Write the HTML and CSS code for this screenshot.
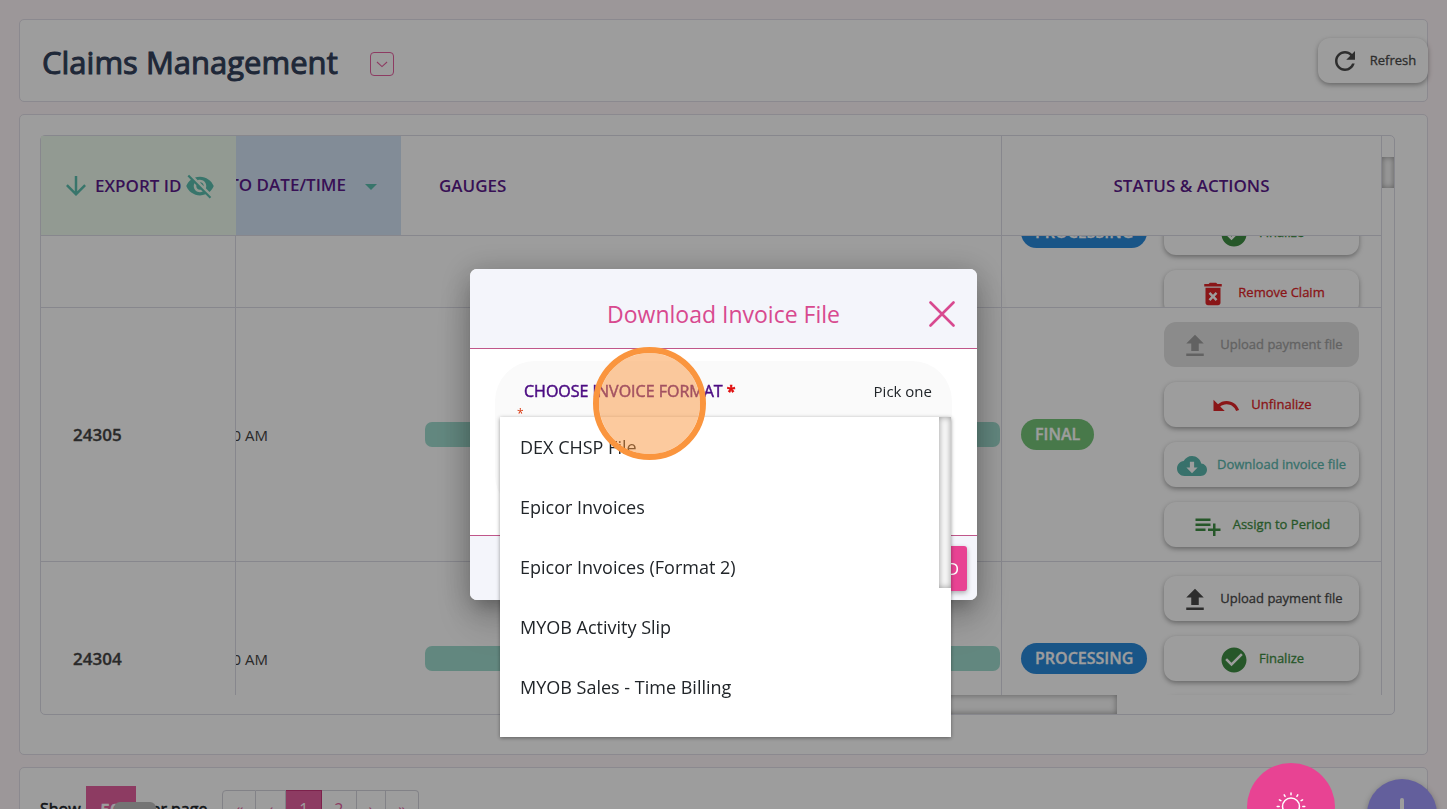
FILE: index.html
```html
<!DOCTYPE html>
<html lang="en">
<head>
<title>Claims Management</title>
<meta charset="utf-8">
<meta name="viewport" content="width=device-width, initial-scale=1">
<link rel="stylesheet" href="styles.css">
</head>
<body>
	<!-- icons shared by the table and the toolbar -->
	<svg class="sprite" aria-hidden="true">
		<symbol id="i-refresh" viewBox="0 0 24 24"><path d="M17.65 6.35C16.2 4.9 14.21 4 12 4c-4.42 0-7.99 3.58-7.99 8s3.57 8 7.99 8c3.73 0 6.84-2.55 7.73-6h-2.08c-.82 2.33-3.04 4-5.65 4-3.31 0-6-2.69-6-6s2.69-6 6-6c1.66 0 3.14.69 4.22 1.78L13 11h7V4l-2.35 2.35z"/></symbol>
		<symbol id="i-remove" viewBox="0 0 24 24"><path d="M6 19c0 1.1.9 2 2 2h8c1.1 0 2-.9 2-2V7H6v12zm2.46-7.12l1.41-1.41L12 12.59l2.12-2.12 1.41 1.41L13.41 14l2.12 2.12-1.41 1.41L12 15.41l-2.12 2.12-1.41-1.41L10.59 14l-2.13-2.12zM15.5 4l-1-1h-5l-1 1H5v2h14V4z"/></symbol>
		<symbol id="i-upload" viewBox="0 0 24 24"><path d="M9 16h6v-6h4l-7-7-7 7h4zm-4 2h14v2H5z"/></symbol>
		<symbol id="i-undo" viewBox="0 0 24 24"><path d="M12.5 8c-2.65 0-5.05.99-6.9 2.6L2 7v9h9l-3.62-3.62c1.39-1.16 3.16-1.88 5.12-1.88 3.54 0 6.55 2.31 7.6 5.5l2.37-.78C21.08 11.03 17.15 8 12.5 8z"/></symbol>
		<symbol id="i-cloud" viewBox="0 0 24 24"><path fill-rule="evenodd" d="M19.35 10.04C18.67 6.59 15.64 4 12 4 9.11 4 6.6 5.64 5.35 8.04 2.34 8.36 0 10.91 0 14c0 3.31 2.69 6 6 6h13c2.76 0 5-2.24 5-5 0-2.64-2.05-4.78-4.65-4.96zM16.5 13.2L12 17.7l-4.5-4.5h2.8V8.6h3.4v4.6z"/></symbol>
		<symbol id="i-assign" viewBox="0 0 24 24"><path d="M14 10H2v2h12v-2zm0-4H2v2h12V6zm4 8v-4h-2v4h-4v2h4v4h2v-4h4v-2h-4zM2 16h8v-2H2v2z"/></symbol>
		<symbol id="i-check" viewBox="0 0 24 24"><path d="M12 2C6.48 2 2 6.48 2 12s4.48 10 10 10 10-4.48 10-10S17.52 2 12 2zm-2 15l-5-5 1.41-1.41L10 14.17l7.59-7.59L19 8l-9 9z"/></symbol>
		<symbol id="i-hidden" viewBox="0 0 24 24"><path d="M12 7c2.76 0 5 2.24 5 5 0 .65-.13 1.26-.36 1.83l2.92 2.92c1.51-1.26 2.7-2.89 3.43-4.75-1.73-4.39-6-7.5-11-7.5-1.4 0-2.74.25-3.98.7l2.16 2.16C10.74 7.13 11.35 7 12 7zM2 4.27l2.28 2.28.46.46C3.08 8.3 1.78 10.02 1 12c1.73 4.39 6 7.5 11 7.5 1.55 0 3.03-.3 4.38-.84l.42.42L19.73 22 21 20.73 3.27 3 2 4.27zM7.53 9.8l1.55 1.55c-.05.21-.08.43-.08.65 0 1.66 1.34 3 3 3 .22 0 .44-.03.65-.08l1.55 1.55c-.67.33-1.41.53-2.2.53-2.76 0-5-2.24-5-5 0-.79.2-1.53.53-2.2zm4.31-.78l3.15 3.15.02-.16c0-1.66-1.34-3-3-3l-.17.01z"/></symbol>
		<symbol id="i-down" viewBox="0 0 24 24"><path d="M20 12l-1.41-1.41L13 16.17V4h-2v12.17l-5.58-5.59L4 12l8 8 8-8z"/></symbol>
	</svg>

	<div class="page">
		<header class="card title-bar">
			<h1>Claims Management</h1>
			<button class="expand" aria-label="Expand">
				<svg viewBox="0 0 24 24" width="22" height="22"><path d="M6.500 9.800l5.500 5 5.500-5" fill="none" stroke="currentColor" stroke-width="1.200"/></svg>
			</button>
			<button class="action refresh"><svg class="icon"><use href="#i-refresh"/></svg><span>Refresh</span></button>
		</header>

		<main class="card claims">
			<div class="grid-box">
				<div class="grid-top">
					<div class="grid-view">
						<table>
							<colgroup>
								<col class="col-id"><col class="col-date"><col><col class="col-status">
							</colgroup>
							<thead>
								<tr>
									<th class="th-id">
										<div class="th-row">
											<svg class="icon"><use href="#i-down"/></svg>
											<span>EXPORT ID</span>
											<svg class="icon"><use href="#i-hidden"/></svg>
										</div>
									</th>
									<th class="th-date"><div class="th-end"><span>TO DATE/TIME</span><i class="caret"></i></div></th>
									<th class="th-gauges">GAUGES</th>
									<th class="th-status">STATUS &amp; ACTIONS</th>
								</tr>
							</thead>
							<tbody>
								<tr class="row-cut">
									<td></td>
									<td></td>
									<td></td>
									<td>
										<div class="cut">
											<div class="status scrolled">
												<div class="pill-box"><span class="pill blue">PROCESSING</span></div>
												<div class="actions">
													<button class="action green"><svg class="icon"><use href="#i-check"/></svg><span>Finalize</span></button>
													<button class="action red"><svg class="icon"><use href="#i-remove"/></svg><span>Remove Claim</span></button>
												</div>
											</div>
										</div>
									</td>
								</tr>
								<tr>
									<td class="claim-id">24305</td>
									<td><div class="date">10:00 AM</div></td>
									<td><div class="gauge"></div></td>
									<td>
										<div class="status">
											<div class="pill-box"><span class="pill final">FINAL</span></div>
											<div class="actions">
												<button class="action" disabled><svg class="icon"><use href="#i-upload"/></svg><span>Upload payment file</span></button>
												<button class="action red"><svg class="icon"><use href="#i-undo"/></svg><span>Unfinalize</span></button>
												<button class="action teal"><svg class="icon"><use href="#i-cloud"/></svg><span>Download invoice file</span></button>
												<button class="action green"><svg class="icon"><use href="#i-assign"/></svg><span>Assign to Period</span></button>
											</div>
										</div>
									</td>
								</tr>
								<tr>
									<td class="claim-id">24304</td>
									<td><div class="date">10:00 AM</div></td>
									<td><div class="gauge"></div></td>
									<td>
										<div class="status">
											<div class="pill-box"><span class="pill blue">PROCESSING</span></div>
											<div class="actions">
												<button class="action"><svg class="icon"><use href="#i-upload"/></svg><span>Upload payment file</span></button>
												<button class="action green"><svg class="icon"><use href="#i-check"/></svg><span>Finalize</span></button>
												<button class="action red" aria-label="Remove Claim"></button>
											</div>
										</div>
									</td>
								</tr>
							</tbody>
						</table>
					</div>
					<div class="vbar"><div class="thumb"></div></div>
				</div>
				<div class="hbar"><div class="thumb"></div></div>
			</div>
		</main>

		<footer class="card pager">
			<label for="per-page">Show</label>
			<div class="per-page">
				<select id="per-page"><option>50</option></select>
				<div class="per-page-tip"></div>
			</div>
			<span class="pager-text">per page</span>
			<nav class="pages">
				<a href="#">«</a>
				<a href="#">‹</a>
				<a href="#" class="active">1</a>
				<a href="#">2</a>
				<a href="#">›</a>
				<a href="#">»</a>
			</nav>
		</footer>
	</div>

	<button class="fab fab-add" aria-label="Add">
		<svg viewBox="0 0 24 24" width="48" height="48"><path d="M12 5v14M5 12h14" stroke="currentColor" stroke-width="2" stroke-linecap="round"/></svg>
	</button>

	<div class="backdrop">
		<div class="modal" role="dialog" aria-labelledby="modal-title">
			<div class="modal-head">
				<h2 id="modal-title">Download Invoice File</h2>
				<button class="close" aria-label="Close">
					<svg viewBox="0 0 26 26" width="26" height="26"><path d="M1.500 1.500l23 23M24.500 1.500l-23 23" stroke="currentColor" stroke-width="2.600" stroke-linecap="round"/></svg>
				</button>
			</div>
			<div class="modal-body">
				<div class="field">
					<div class="field-row">
						<span class="field-label">CHOOSE INVOICE FORMAT <b>*</b></span>
						<span class="field-hint">Pick one</span>
					</div>
					<span class="req">*</span>
				</div>
			</div>
			<div class="modal-foot">
				<button class="download">DOWNLOAD</button>
			</div>
			<div class="dropdown">
				<ul role="listbox" aria-label="Choose invoice format">
					<li role="option">DEX CHSP File</li>
					<li role="option">Epicor Invoices</li>
					<li role="option">Epicor Invoices (Format 2)</li>
					<li role="option">MYOB Activity Slip</li>
					<li role="option">MYOB Sales - Time Billing</li>
				</ul>
				<div class="dropdown-bar"><div class="thumb"></div></div>
			</div>
			<div class="marker"></div>
		</div>
	</div>

	<button class="fab fab-tips" aria-label="Tips">
		<svg viewBox="0 0 32 32" width="32" height="32" fill="none" stroke="currentColor" stroke-width="1.500" stroke-linecap="round">
			<path d="M12.500 25v-2.500c-3-1.600-5-4-5-7a8.500 8.500 0 0 1 17 0c0 3-2 5.400-5 7V25z"/>
			<path d="M16 2v1.800M9.200 3.800l.9 1.600M22.800 3.800l-.9 1.600M4.400 8.800l1.500.9M27.600 8.800l-1.500.9M2.200 15.500h2M27.800 15.500h2"/>
		</svg>
	</button>
</body>
</html>
```
FILE: styles.css
```css
* {
	box-sizing: border-box;
}
body {
	margin: 0;
	height: 100vh;
	overflow: hidden;
	background-color: #fef5f8;
	font-family: "Open Sans", sans-serif;
	color: #212529;
}
button {
	font-family: inherit;
	cursor: pointer;
}
.sprite {
	display: none;
}
.icon {
	width: 30px;
	height: 30px;
	fill: currentColor;
	flex: none;
}
.page {
	display: flex;
	flex-direction: column;
	gap: 12px;
	height: 100vh;
	overflow: hidden;
	padding: 19px 19px 0;
}
.card {
	flex: none;
	background-color: white;
	border: 1px solid #e2dfe8;
	border-radius: 5px;
}

/* title */
.title-bar {
	display: flex;
	align-items: center;
	height: 83px;
	padding-left: 22px;
}
h1 {
	margin: 0 32px 0 0;
	padding-top: 2px;
	font-size: 31px;
	font-weight: 400;
	color: #33415c;
	-webkit-text-stroke: 1px #33415c;
}
.expand {
	width: 24px;
	height: 24px;
	margin-top: 6px;
	padding: 0;
	border: 1px solid #e5609f;
	border-radius: 4px;
	background: none;
	color: #e5609f;
	display: flex;
	align-items: center;
	justify-content: center;
}
.action {
	display: flex;
	align-items: center;
	justify-content: center;
	gap: 10px;
	width: 195px;
	height: 45px;
	padding: 0;
	border: none;
	border-radius: 12px;
	background-color: white;
	box-shadow: 0 2px 5px rgba(0, 0, 0, .35);
	color: #4a4a4a;
	font-size: 13px;
	white-space: nowrap;
	-webkit-text-stroke: .3px currentColor;
}
.action .icon {
	-webkit-text-stroke: 0;
	margin-top: 2px;
}
.action span {
	padding-bottom: 2px;
}
.action.green { color: #3f8e43; }
.action.red { color: #e02428; }
.action.teal { color: #5bb8ae; }
.action:disabled {
	background-color: #e2e2e2;
	box-shadow: none;
	color: #a0a0a0;
}
.refresh {
	width: 110px;
	margin-left: auto;
	margin-right: -1px;
}
.refresh .icon {
	margin-top: 0;
}

/* claims table */
.claims {
	padding: 20px 32px 39px 20px;
}
.grid-box {
	border: 1px solid #dcdce6;
	border-radius: 5px;
}
.grid-top {
	display: flex;
	height: 559px;
}
.grid-view {
	flex: 1;
	overflow: hidden;
	border-right: 1px solid #dcdce6;
}
table {
	width: 100%;
	table-layout: fixed;
	border-collapse: separate;
	border-spacing: 0;
}
.col-id { width: 195px; }
.col-date { width: 165px; }
.col-status { width: 380px; }
th, td {
	padding: 0;
	border-bottom: 1px solid #dcdce6;
}
th {
	height: 100px;
	font-size: 17px;
	font-weight: 600;
	color: #5b1a8b;
	text-align: left;
	white-space: nowrap;
}
td:first-child {
	border-right: 1px solid #dcdce6;
}
td:last-child, .th-status {
	border-left: 1px solid #dcdce6;
}
.th-id {
	background-color: #eefaee;
}
.th-row {
	display: flex;
	align-items: center;
	gap: 4px;
	padding-left: 20px;
}
.th-row .icon {
	color: #5bbfae;
}
.th-date {
	background-color: #d4e3f5;
}
.th-end {
	display: flex;
	align-items: center;
	justify-content: flex-end;
	gap: 19px;
	padding-right: 24px;
	padding-bottom: 2px;
	overflow: hidden;
}
.caret {
	margin-top: 4px;
	border: 6px solid transparent;
	border-top-color: #5bbfae;
	border-bottom: none;
}
.th-gauges {
	padding-left: 38px;
}
.th-status {
	text-align: center;
}
.claim-id {
	padding-left: 32px;
	font-size: 17px;
	font-weight: 600;
	color: #444;
	-webkit-text-stroke: .3px #444;
}
.date {
	display: flex;
	justify-content: flex-end;
	width: 32px;
	overflow: hidden;
	font-size: 15px;
	color: #444;
	white-space: nowrap;
}
.gauge {
	height: 25px;
	margin-left: 24px;
	margin-right: 1px;
	border-radius: 7px;
	background-color: #a0dccf;
}
.cut {
	height: 71px;
	overflow: hidden;
}
.scrolled {
	margin-top: -40px;
}
.status {
	display: flex;
	align-items: center;
	padding: 14px 22px 14px 19px;
}
.pill-box {
	flex: 1;
	padding-bottom: 1px;
}
.scrolled .pill-box {
	padding-bottom: 60px;
}
.pill {
	display: inline-block;
	padding: 0 14px;
	border-radius: 16px;
	font-size: 16px;
	font-weight: 600;
	line-height: 31px;
	color: white;
	-webkit-text-stroke: .3px white;
}
.pill.blue { background-color: #2a8adc; }
.pill.final { background-color: #76c578; }
.actions {
	display: flex;
	flex-direction: column;
	gap: 15px;
}

/* drawn scrollbars */
.thumb {
	background-color: #f8f8f8;
	box-shadow: inset 0 0 6px rgba(0, 0, 0, .4);
}
.vbar {
	width: 12px;
	padding-top: 21px;
}
.vbar .thumb {
	height: 31px;
}
.hbar .thumb {
	width: 42%;
	height: 19px;
	margin-left: 37.500%;
}

/* pager */
.pager {
	display: flex;
	align-items: center;
	height: 84px;
	padding-left: 20px;
	font-size: 16px;
	-webkit-text-stroke: .6px currentColor;
}
.per-page {
	position: relative;
	margin: 0 6px 0 5px;
}
.per-page select {
	display: block;
	appearance: none;
	width: 50px;
	height: 46px;
	padding: 0 0 0 15px;
	border: none;
	border-radius: 0;
	background-color: #e5609f;
	color: white;
	font: 600 17px "Open Sans", sans-serif;
}
.per-page-tip {
	position: absolute;
	left: 28px;
	top: 16px;
	width: 42px;
	height: 30px;
	border-radius: 6px;
	background-color: #bdbdbd;
}
.pages {
	display: flex;
	margin-left: 15px;
	-webkit-text-stroke: 0;
}
.pages a {
	padding: 6px 12px;
	border: 1px solid #d4d4dc;
	border-left: none;
	color: #e5609f;
	line-height: 24px;
	text-decoration: none;
}
.pages a:first-child {
	border-left: 1px solid #d4d4dc;
	border-radius: 4px 0 0 4px;
}
.pages a:last-child {
	border-radius: 0 4px 4px 0;
}
.pages .active {
	padding: 6px 13px;
	background-color: #e5609f;
	border-color: #c9377b;
	color: white;
}

/* floating buttons */
.fab {
	position: fixed;
	display: flex;
	align-items: center;
	justify-content: center;
	padding: 0;
	border: none;
	border-radius: 50%;
	color: white;
}
.fab-add {
	right: 10px;
	bottom: -40px;
	width: 70px;
	height: 70px;
	background-color: #a29bfe;
	box-shadow: 0 2px 6px rgba(0, 0, 0, .3);
}
.fab-tips {
	right: 112px;
	bottom: -42px;
	width: 88px;
	height: 88px;
	background-color: #e84393;
}

/* modal */
.backdrop {
	position: fixed;
	inset: 0;
	display: flex;
	align-items: center;
	justify-content: center;
	padding-top: 60px;
	background-color: rgba(0, 0, 0, .385);
}
.modal {
	position: relative;
	width: 507px;
	border-radius: 7px;
	background-color: white;
	box-shadow: 0 11px 15px -7px rgba(0, 0, 0, .2), 0 24px 38px 3px rgba(0, 0, 0, .14), 0 4px 30px 4px rgba(0, 0, 0, .2);
}
.modal-head {
	position: relative;
	display: flex;
	align-items: center;
	justify-content: center;
	height: 80px;
	padding-top: 10px;
	border-bottom: 1px solid #c0568a;
	border-radius: 7px 7px 0 0;
	background-color: #f4f5fb;
	color: #d8498f;
}
h2 {
	margin: 0;
	font-size: 23px;
	font-weight: 400;
}
.close {
	position: absolute;
	right: 22px;
	top: 32px;
	display: flex;
	padding: 0;
	border: none;
	background: none;
	color: #d8498f;
}
.modal-body {
	padding: 12px 25px 20px;
}
.field {
	height: 154px;
	padding: 19px 20px 0 29px;
	border-radius: 40px;
	background-color: #fafafa;
}
.field-row {
	display: flex;
	justify-content: space-between;
	align-items: center;
	line-height: 22px;
}
.field-label {
	font-size: 16px;
	color: #4b0b82;
	-webkit-text-stroke: .5px currentColor;
}
.field-label b {
	color: #e01010;
}
.field-hint {
	font-size: 15px;
}
.req {
	display: block;
	margin-left: -7px;
	color: #d8350c;
	font-size: 12px;
	line-height: 24px;
}
.modal-foot {
	display: flex;
	justify-content: flex-end;
	padding: 10px 10px 9px;
	border-top: 1px solid #c0568a;
	border-radius: 0 0 7px 7px;
	background-color: #f4f5fb;
}
.download {
	height: 45px;
	padding: 0 8px;
	border: none;
	border-radius: 3px;
	background-color: #e84393;
	box-shadow: 0 2px 5px rgba(0, 0, 0, .3);
	color: white;
	font-size: 17px;
}
.dropdown {
	position: absolute;
	left: 30px;
	right: 26px;
	top: 148px;
	display: flex;
	height: 320px;
	background-color: white;
	box-shadow: 0 1px 4px rgba(0, 0, 0, .4);
}
.dropdown ul {
	flex: 1;
	margin: 0;
	padding: 0;
	list-style: none;
}
.dropdown li {
	padding-left: 20px;
	font-size: 18px;
	line-height: 60px;
}
.dropdown-bar {
	width: 12px;
}
.dropdown-bar .thumb {
	height: 171px;
}

/* click marker */
.marker {
	position: absolute;
	left: 123px;
	top: 78px;
	width: 113px;
	height: 113px;
	border: 6px solid #fa953e;
	border-radius: 50%;
	background-color: rgba(250, 149, 62, .5);
	background-clip: padding-box;
}
```
